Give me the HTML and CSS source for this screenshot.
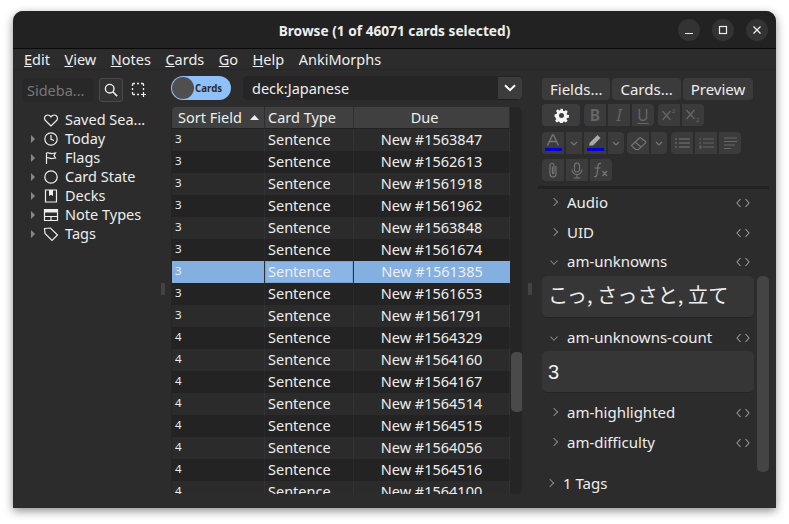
FILE: index.html
```html
<!DOCTYPE html>
<html lang="en">
<head>
    <meta charset="UTF-8">
    <title>Browse</title>
    <link rel="stylesheet" href="styles.css">
</head>
<body>
    <div class="window">
        <div class="titlebar">
            <div class="title">Browse (1 of 46071 cards selected)</div>
            <div class="win-buttons">
                <span class="win-btn"><svg width="12" height="12" viewBox="0 0 12 12"><path d="M2 9.500h8" stroke="#eee" stroke-width="1.200" fill="none"/></svg></span>
                <span class="win-btn"><svg width="12" height="12" viewBox="0 0 12 12"><rect x="2.500" y="2.500" width="7" height="7" stroke="#eee" stroke-width="1.200" fill="none"/></svg></span>
                <span class="win-btn"><svg width="12" height="12" viewBox="0 0 12 12"><path d="M2.500 2.500l7 7M9.500 2.500l-7 7" stroke="#eee" stroke-width="1.300" fill="none"/></svg></span>
            </div>
        </div>
        <div class="menubar">
            <span><u>E</u>dit</span>
            <span><u>V</u>iew</span>
            <span><u>N</u>otes</span>
            <span><u>C</u>ards</span>
            <span><u>G</u>o</span>
            <span><u>H</u>elp</span>
            <span>AnkiMorphs</span>
        </div>
        <div class="main">
            <div class="sidebar">
                <div class="side-search">
                    <div class="side-input">Sideba...</div>
                    <span class="search-btn"><svg width="14" height="14" viewBox="0 0 14 14"><circle cx="5.700" cy="5.700" r="4.300" stroke="#eee" stroke-width="1.400" fill="none"/><path d="M8.800 8.800l4.300 4.300" stroke="#eee" stroke-width="1.600"/></svg></span>
                    <svg class="select-icon" width="16" height="16" viewBox="0 0 16 16"><path d="M1.500 4V2.500a1 1 0 0 1 1-1H4M6 1.500h2M10 1.500h1.500a1 1 0 0 1 1 1V4M12.500 6v2M1.500 6v2M1.500 10v1.500a1 1 0 0 0 1 1H4M6 12.500h2" stroke="#eee" stroke-width="1.300" fill="none"/><path d="M12.500 10v5M10 12.500h5" stroke="#eee" stroke-width="1.200"/></svg>
                </div>
                <div class="tree">
                    <div class="tree-row"><span class="arrow none"></span><svg class="tree-icon" width="16" height="16" viewBox="0 0 16 16"><path d="M8 14L2.200 8.300C.8 6.700 1.500 3 4.800 3 6.400 3 7.400 3.900 8 4.800 8.600 3.900 9.600 3 11.200 3c3.300 0 4 3.700 2.600 5.300z" stroke="#eee" stroke-width="1.200" fill="none"/></svg><span>Saved Sea...</span></div>
                    <div class="tree-row"><span class="arrow"></span><svg class="tree-icon" width="16" height="16" viewBox="0 0 16 16"><circle cx="8" cy="8" r="6.200" stroke="#eee" stroke-width="1.200" fill="none"/><path d="M8 4v4.300l3 1.200" stroke="#eee" stroke-width="1.200" fill="none"/></svg><span>Today</span></div>
                    <div class="tree-row"><span class="arrow"></span><svg class="tree-icon" width="16" height="16" viewBox="0 0 16 16"><path d="M3.500 14V3c2 -1 3.500 1 5.500 .5l3.500 -.5-1.500 2.500 1.500 2.500-3.500 .5c-2 .3-3.500-1.500-5.500-.5" stroke="#eee" stroke-width="1.200" fill="none"/></svg><span>Flags</span></div>
                    <div class="tree-row"><span class="arrow"></span><svg class="tree-icon" width="16" height="16" viewBox="0 0 16 16"><circle cx="8" cy="8" r="6.200" stroke="#eee" stroke-width="1.300" fill="none"/></svg><span>Card State</span></div>
                    <div class="tree-row"><span class="arrow"></span><svg class="tree-icon" width="16" height="16" viewBox="0 0 16 16"><path d="M2.500 2h11v12h-11z" stroke="#eee" stroke-width="1.200" fill="none"/><path d="M6 2h4v6L8 6.700 6 8z" fill="#eee"/></svg><span>Decks</span></div>
                    <div class="tree-row"><span class="arrow"></span><svg class="tree-icon" width="16" height="16" viewBox="0 0 16 16"><path d="M1.500 2.500h13v11h-13z" stroke="#eee" stroke-width="1.200" fill="none"/><path d="M1.500 2.500h13v3h-13z" fill="#eee"/><path d="M1.500 9.500h13M8 9.500v4" stroke="#eee" stroke-width="1.200"/></svg><span>Note Types</span></div>
                    <div class="tree-row"><span class="arrow"></span><svg class="tree-icon" width="16" height="16" viewBox="0 0 16 16"><path d="M1.500 2.500L7.500 2 14.500 9 9 14.500 2 7.500z" stroke="#eee" stroke-width="1.200" fill="none"/></svg><span>Tags</span></div>
                </div>
            </div>
            <div class="splitter"><span class="grip"></span></div>
            <div class="center">
                <div class="search-row">
                    <div class="toggle"><span class="knob"></span><span class="toggle-text">Cards</span></div>
                    <div class="query">
                        <span class="query-text">deck:Japanese</span>
                        <span class="query-btn"><svg width="12" height="8" viewBox="0 0 12 8"><path d="M1 1.200l5 5 5-5" stroke="#fff" stroke-width="2" fill="none"/></svg></span>
                    </div>
                </div>
                <div class="table-wrap">
                    <div class="table">
                        <div class="cols head">
                            <div class="h1">Sort Field<svg class="sort" width="9" height="5" viewBox="0 0 9 5"><path d="M0 5l4.500-5L9 5z" fill="#eee"/></svg></div>
                            <div class="h2">Card Type</div>
                            <div class="h3">Due</div>
                        </div>
                        <div class="rows" id="rows"></div>
                    </div>
                    <div class="vscroll"><span class="thumb"></span></div>
                </div>
            </div>
            <div class="splitter"><span class="grip"></span></div>
            <div class="editor">
                <div class="tabs">
                    <span class="btn">Fields...</span>
                    <span class="btn">Cards...</span>
                    <span class="btn">Preview</span>
                </div>
                <div class="tools row-a">
                    <span class="tool wide"><svg width="15" height="15" viewBox="0 0 24 24"><path fill="#f4f4f4" fill-rule="evenodd" d="M10 1h4l.6 3.200 1.900.8 2.700-1.800 2.800 2.800-1.800 2.700.8 1.900 3 .6v4l-3.200.6-.8 1.900 1.800 2.700-2.800 2.800-2.700-1.800-1.900.8-.6 3.200h-4l-.6-3.200-1.900-.8-2.700 1.800-2.800-2.800 1.800-2.700-.8-1.900L1 14v-4l3.200-.6.800-1.900-1.800-2.700 2.800-2.800 2.700 1.800 1.900-.8zM12 8a4 4 0 1 0 0 8 4 4 0 0 0 0-8z"/></svg></span>
                    <span class="group ml">
                        <span class="tool txt b">B</span>
                        <span class="tool txt i">I</span>
                        <span class="tool txt u">U</span>
                    </span>
                    <span class="group ml">
                        <span class="tool"><svg width="18" height="16" viewBox="0 0 18 16"><path d="M2.500 4l8 9M10.500 4l-8 9" stroke="#666" stroke-width="1.300" fill="none"/><text x="12" y="6" font-size="6" fill="#666" font-family="Noto Sans">2</text></svg></span>
                        <span class="tool"><svg width="18" height="16" viewBox="0 0 18 16"><path d="M2.500 3l8 9M10.500 3l-8 9" stroke="#666" stroke-width="1.300" fill="none"/><text x="12" y="15" font-size="6" fill="#666" font-family="Noto Sans">2</text></svg></span>
                    </span>
                </div>
                <div class="tools row-b">
                    <span class="group">
                        <span class="tool color"><svg width="14" height="12" viewBox="0 0 14 12"><path d="M1.500 11.500L6.500 1h1l5 10.500M3.500 7.500h7" stroke="#777" stroke-width="1.300" fill="none"/></svg><i class="swatch"></i></span>
                        <span class="tool caret"><svg width="8" height="5" viewBox="0 0 8 5"><path d="M1 1l3 3 3-3" stroke="#777" stroke-width="1.200" fill="none"/></svg></span>
                        <span class="tool color"><svg width="15" height="12" viewBox="0 0 15 12"><path d="M1 11.500l1-3L9.500 1l3 3-7.500 7.500z" fill="#aaa"/></svg><i class="swatch"></i></span>
                        <span class="tool caret"><svg width="8" height="5" viewBox="0 0 8 5"><path d="M1 1l3 3 3-3" stroke="#777" stroke-width="1.200" fill="none"/></svg></span>
                    </span>
                    <span class="group ml-eraser">
                        <span class="tool"><svg width="17" height="15" viewBox="0 0 17 15"><path d="M1.500 9.500L9.500 2a1 1 0 0 1 1.400 0L15.500 5.500a1 1 0 0 1 0 1.400L8.500 13.500H5.500zM5 6l6 5" stroke="#777" stroke-width="1.100" fill="none"/></svg></span>
                        <span class="tool caret"><svg width="8" height="5" viewBox="0 0 8 5"><path d="M1 1l3 3 3-3" stroke="#777" stroke-width="1.200" fill="none"/></svg></span>
                    </span>
                    <span class="group ml">
                        <span class="tool"><svg width="15" height="12" viewBox="0 0 15 12"><path d="M0 2h2M0 6h2M0 10h2M4 2h11M4 6h11M4 10h11" stroke="#666" stroke-width="1.300"/></svg></span>
                        <span class="tool"><svg width="15" height="12" viewBox="0 0 15 12"><path d="M1 1v2M0 6h2M0 9h2v2H0M4 2h11M4 6h11M4 10h11" stroke="#666" stroke-width="1.100" fill="none"/></svg></span>
                        <span class="tool"><svg width="13" height="12" viewBox="0 0 13 12"><path d="M0 1h13M0 4.500h13M0 8h11M0 11.500h7" stroke="#666" stroke-width="1.200"/></svg></span>
                    </span>
                </div>
                <div class="tools row-c">
                    <span class="group">
                        <span class="tool"><svg width="10" height="16" viewBox="0 0 10 16"><path d="M8 4v8a3 3 0 0 1-6 0V3.500a2 2 0 0 1 4 0V11a.8.8 0 0 1-1.600 0V4.500" stroke="#777" stroke-width="1.100" fill="none"/></svg></span>
                        <span class="tool"><svg width="12" height="17" viewBox="0 0 12 17"><rect x="3.500" y="1" width="5" height="9" rx="2.500" stroke="#777" stroke-width="1.100" fill="none"/><path d="M1 7.500a5 5 0 0 0 10 0M6 12.500V16M2.500 16h7" stroke="#777" stroke-width="1.100" fill="none"/></svg></span>
                        <span class="tool"><svg width="18" height="16" viewBox="0 0 18 16"><path d="M9 1.500C7 1 6.200 2 6 4L5 12c-.2 2-1 3-3 2.500M2.500 6h6M10.500 9l4.500 5M15 9l-4.500 5" stroke="#777" stroke-width="1.200" fill="none"/></svg></span>
                    </span>
                </div>
                <div class="editor-line"></div>
                <div class="fields">
                    <div class="field-list">
                        <div class="field-row"><span class="chev right"></span><span class="field-name">Audio</span><svg class="code" width="14" height="10" viewBox="0 0 14 10"><path d="M4.500 1L1 5l3.500 4M9.500 1L13 5 9.500 9" stroke="#999" stroke-width="1.100" fill="none"/></svg></div>
                        <div class="field-row"><span class="chev right"></span><span class="field-name">UID</span><svg class="code" width="14" height="10" viewBox="0 0 14 10"><path d="M4.500 1L1 5l3.500 4M9.500 1L13 5 9.500 9" stroke="#999" stroke-width="1.100" fill="none"/></svg></div>
                        <div class="field-row open"><span class="chev down"></span><span class="field-name">am-unknowns</span><svg class="code" width="14" height="10" viewBox="0 0 14 10"><path d="M4.500 1L1 5l3.500 4M9.500 1L13 5 9.500 9" stroke="#999" stroke-width="1.100" fill="none"/></svg></div>
                        <div class="field-box jp">こっ, さっさと, 立て</div>
                        <div class="field-row open second"><span class="chev down"></span><span class="field-name">am-unknowns-count</span><svg class="code" width="14" height="10" viewBox="0 0 14 10"><path d="M4.500 1L1 5l3.500 4M9.500 1L13 5 9.500 9" stroke="#999" stroke-width="1.100" fill="none"/></svg></div>
                        <div class="field-box num">3</div>
                        <div class="field-row after-box"><span class="chev right"></span><span class="field-name">am-highlighted</span><svg class="code" width="14" height="10" viewBox="0 0 14 10"><path d="M4.500 1L1 5l3.500 4M9.500 1L13 5 9.500 9" stroke="#999" stroke-width="1.100" fill="none"/></svg></div>
                        <div class="field-row"><span class="chev right"></span><span class="field-name">am-difficulty</span><svg class="code" width="14" height="10" viewBox="0 0 14 10"><path d="M4.500 1L1 5l3.500 4M9.500 1L13 5 9.500 9" stroke="#999" stroke-width="1.100" fill="none"/></svg></div>
                        <div class="tags-row"><span class="chev right"></span><span class="tags-text">1 Tags</span></div>
                    </div>
                    <div class="field-scroll"><span class="field-thumb"></span></div>
                </div>
            </div>
        </div>
    </div>
    <script>
        const rows = [
            [3, 1563847], [3, 1562613], [3, 1561918], [3, 1561962], [3, 1563848],
            [3, 1561674], [3, 1561385], [3, 1561653], [3, 1561791], [4, 1564329],
            [4, 1564160], [4, 1564167], [4, 1564514], [4, 1564515], [4, 1564056],
            [4, 1564516], [4, 1564100]
        ];
        const box = document.getElementById("rows");
        rows.forEach((r, i) => {
            const row = document.createElement("div");
            row.className = "cols row" + (i % 2 ? " alt" : "") + (i === 6 ? " selected" : "");
            row.innerHTML = `<div class="c1">${r[0]}</div><div class="c2">Sentence</div><div class="c3">New #${r[1]}</div>`;
            box.appendChild(row);
        });
    </script>
</body>
</html>
```

FILE: styles.css
```css
* {
    box-sizing: border-box;
}
body {
    margin: 0;
    background: #fff;
    height: 524px;
    overflow: hidden;
    font-family: "Noto Sans", sans-serif;
    font-size: 14.5px;
    color: #eee;
}
.window {
    width: 763px;
    height: 497px;
    margin: 11px 0 0 13px;
    border-radius: 10px 10px 0 0;
    background: #2c2c2c;
    box-shadow: 0 3px 10px rgba(0, 0, 0, 0.45);
    overflow: hidden;
    display: flex;
    flex-direction: column;
}
.titlebar {
    height: 38px;
    flex: none;
    background: #222;
    border-bottom: 1px solid #0a0a0a;
    display: flex;
    align-items: center;
    justify-content: center;
    position: relative;
}
.title {
    font-size: 13.7px;
    font-weight: 700;
    margin-top: 1px;
}
.win-buttons {
    position: absolute;
    right: 8px;
    top: 8px;
    display: flex;
    gap: 12px;
}
.win-btn {
    width: 22px;
    height: 22px;
    border-radius: 50%;
    background: #333;
    display: flex;
    align-items: center;
    justify-content: center;
}
.menubar {
    height: 21px;
    flex: none;
    display: flex;
    gap: 14.5px;
    padding-left: 11px;
    align-items: center;
    border-bottom: 1px solid #262626;
    line-height: 20px;
}
.main {
    flex: 1;
    min-height: 0;
    display: flex;
}
.sidebar {
    width: 142px;
    flex: none;
    padding: 8px 0 0 10px;
}
.side-search {
    display: flex;
    align-items: center;
    height: 24px;
    margin-left: -1px;
}
.side-input {
    width: 72px;
    height: 24px;
    border-radius: 5px;
    background: #282828;
    color: #777;
    padding-left: 5px;
    line-height: 24px;
}
.search-btn {
    width: 24px;
    height: 24px;
    margin-left: 5px;
    border: 1px solid #4a4a4a;
    border-radius: 3px;
    background: #333;
    display: flex;
    align-items: center;
    justify-content: center;
}
.select-icon {
    margin-left: 8px;
}
.tree {
    margin-top: 8px;
}
.tree-row {
    height: 19px;
    display: flex;
    align-items: center;
    line-height: 19px;
    white-space: nowrap;
}
.arrow {
    width: 0;
    height: 0;
    flex: none;
    margin-left: 8px;
    border-left: 4px solid #888;
    border-top: 4px solid transparent;
    border-bottom: 4px solid transparent;
}
.arrow.none {
    border-color: transparent;
}
.tree-icon {
    margin-left: 8px;
    margin-right: 6px;
    flex: none;
}
.splitter {
    width: 16px;
    flex: none;
    display: flex;
    align-items: center;
    justify-content: center;
}
.grip {
    width: 4px;
    height: 12px;
    background-image: radial-gradient(circle, #5c5c5c 0.6px, transparent 0.8px);
    background-size: 2px 2px;
}
.center {
    width: 351px;
    flex: none;
    padding-top: 6px;
    min-width: 0;
}
.search-row {
    display: flex;
    align-items: center;
    height: 24px;
}
.toggle {
    width: 60px;
    height: 24px;
    border-radius: 12px;
    background: #90c0f8;
    display: flex;
    align-items: center;
    padding-left: 1px;
    flex: none;
}
.knob {
    width: 22px;
    height: 22px;
    border-radius: 50%;
    background: #4f4f4f;
}
.toggle-text {
    font-size: 9.7px;
    font-weight: 700;
    color: #2c2c2c;
    margin-left: 1px;
}
.query {
    margin-left: 12px;
    width: 279px;
    height: 24px;
    border-radius: 5px;
    background: #252525;
    display: flex;
    align-items: center;
    justify-content: space-between;
    padding-left: 9px;
    overflow: hidden;
}
.query-btn {
    width: 24px;
    height: 23px;
    background: #3c3c3c;
    border-bottom: 1px solid #1e1e1e;
    display: flex;
    align-items: center;
    justify-content: center;
}
.table-wrap {
    margin-top: 7px;
    height: 387px;
    padding-left: 1px;
    background: #252525;
    border-radius: 5px;
    display: flex;
    overflow: hidden;
}
.table {
    width: 338px;
    flex: none;
    overflow: hidden;
}
.cols {
    display: grid;
    grid-template-columns: 93px 89px 156px;
}
.head {
    height: 22px;
    background: #404040;
    line-height: 21px;
    border-bottom: 1px solid #222;
}
.head > div {
    border-right: 1px solid #2e2e2e;
}
.h1 {
    padding-left: 6px;
    position: relative;
}
.sort {
    position: absolute;
    right: 5px;
    top: 8px;
}
.h2 {
    padding-left: 3px;
}
.h3 {
    text-align: center;
    padding-right: 14px;
}
.row {
    height: 22px;
    background: #2b2b2b;
    line-height: 21px;
}
.row.alt {
    background: #232323;
}
.row > div {
    border-right: 1px solid #333;
}
.row.alt > div {
    border-right-color: #2a2a2a;
}
.c1 {
    padding-left: 3px;
    font-size: 11.5px;
    line-height: 19px;
}
.c2 {
    padding-left: 3px;
}
.c3 {
    text-align: center;
}
.row.selected {
    background: #84afe1;
}
.row.selected > div {
    border-right: 1px solid #2f2f2f;
}
.row.selected .c2 {
    background: #8ab5e6;
    box-shadow: inset 0 0 0 1px #7aa4d6;
}
.row.selected .c3 {
    border-right: none;
}
.vscroll {
    flex: 1;
    position: relative;
}
.thumb {
    position: absolute;
    left: 1px;
    top: 245px;
    width: 12px;
    height: 60px;
    border-radius: 5px;
    background: #4a4a4a;
}
.editor {
    flex: 1;
    min-width: 0;
    padding: 8px 0 0 4px;
}
.tabs {
    display: flex;
    gap: 2px;
}
.btn {
    height: 22px;
    padding: 0 8px;
    background: #3b3b3b;
    border-radius: 4px;
    font-size: 15px;
    line-height: 22px;
}
.tools {
    display: flex;
}
.row-a {
    margin-top: 4px;
}
.row-b {
    margin-top: 6px;
}
.row-c {
    margin-top: 5px;
}
.group {
    display: flex;
    gap: 2px;
    border-radius: 4px;
    overflow: hidden;
}
.ml {
    margin-left: 4px;
}
.ml-eraser {
    margin-left: 3px;
}
.row-a .group:first-of-type {
    margin-left: 5px;
}
.tool {
    width: 22px;
    height: 22px;
    background: #3b3b3b;
    display: flex;
    align-items: center;
    justify-content: center;
    position: relative;
}
.tool.wide {
    width: 38px;
    border-radius: 4px;
    background: #3d3d3d;
}
.tool.caret {
    width: 16px;
}
.txt {
    color: #666;
    font-size: 15.5px;
}
.txt.b {
    font-weight: 700;
}
.txt.i {
    font-style: italic;
}
.txt.u {
    text-decoration: underline;
    text-underline-offset: 2px;
}
.color svg {
    margin-top: -6px;
}
.swatch {
    position: absolute;
    left: 3px;
    width: 17px;
    bottom: 3px;
    height: 3px;
    background: #0000e0;
}
.editor-line {
    height: 3px;
    margin: 5px 0 0 -4px;
    width: 231px;
    background: #222;
}
.fields {
    display: flex;
    margin-top: -1px;
}
.field-list {
    width: 212px;
    flex: none;
}
.field-row {
    height: 30px;
    display: flex;
    align-items: center;
    font-size: 15px;
}
.field-row.open {
    height: 28px;
}
.field-row.second {
    height: 33px;
    padding-top: 7px;
}
.field-row.after-box {
    margin-top: 5px;
}
.chev {
    width: 6px;
    height: 6px;
    border-right: 1px solid #888;
    border-bottom: 1px solid #888;
    flex: none;
    margin-left: 9px;
    margin-bottom: 2px;
}
.chev.right {
    transform: rotate(-45deg);
}
.chev.down {
    transform: rotate(45deg) scale(0.9);
}
.field-name {
    margin-left: 10px;
    margin-bottom: 2px;
    flex: 1;
}
.code {
    margin-right: 4px;
    flex: none;
}
.field-box {
    height: 42px;
    border-radius: 5px;
    background: #363636;
    border-bottom: 1px solid #242424;
    padding-left: 6px;
    font-size: 20px;
    display: flex;
    align-items: center;
}
.jp {
    font-size: 20.2px;
    padding-bottom: 4px;
    font-family: "Noto Sans CJK JP", "Noto Sans", sans-serif;
}
.num {
    padding-top: 2px;
    font-family: "Liberation Sans", sans-serif;
}
.tags-row {
    height: 24px;
    margin-top: 14px;
    display: flex;
    align-items: center;
    margin-left: -4px;
    font-size: 15px;
}
.tags-text {
    margin-left: 10px;
    margin-bottom: 2px;
}
.field-scroll {
    width: 12px;
    margin-left: 3px;
    position: relative;
}
.field-thumb {
    position: absolute;
    left: 0;
    top: 88px;
    width: 12px;
    height: 196px;
    border-radius: 5px;
    background: #444;
}
```
